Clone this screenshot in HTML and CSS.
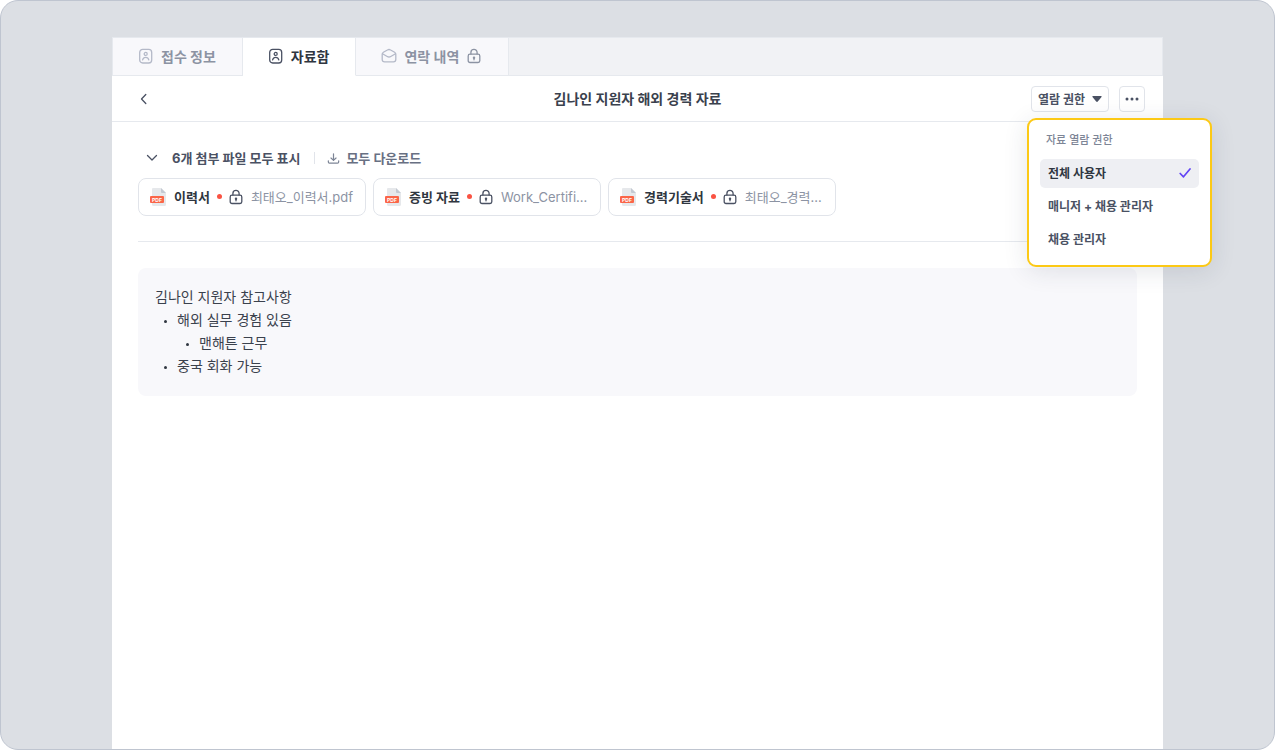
FILE: index.html
```html
<!DOCTYPE html>
<html lang="ko">
<head>
  <meta charset="UTF-8" />
  <meta name="viewport" content="width=device-width, initial-scale=1" />
  <title>자료함</title>
  <link rel="stylesheet" href="styles.css">
</head>
<body>

  <!-- Shared icons -->
  <svg class="sprite" aria-hidden="true">
    <symbol id="icon-profile" viewBox="0 0 16 16">
      <rect x="1.700" y="1.400" width="12" height="13.600" rx="3" />
      <circle cx="7.700" cy="5.900" r="1.500" />
      <path d="M4.600 11.800c.4-1.600 1.600-2.500 3.100-2.500s2.700.9 3.100 2.500" />
    </symbol>
    <symbol id="icon-mail" viewBox="0 0 16 16">
      <path d="M1.200 6.300c0-1 .4-1.600 1.200-2.100l4-2.200c1-.6 2.200-.6 3.200 0l4 2.200c.8.500 1.200 1.100 1.200 2.100v5.200c0 1.500-.9 2.400-2.400 2.400H3.600c-1.500 0-2.400-.9-2.400-2.400z" />
      <path d="M1.500 5.800l4.700 2.700c1.200.7 2.400.7 3.600 0l4.700-2.700" />
    </symbol>
    <symbol id="icon-lock" viewBox="0 0 16 16">
      <rect x="2.200" y="6.200" width="11.600" height="8.300" rx="1.800" />
      <path d="M4.900 6V4.500a3.100 3.100 0 0 1 6.200 0V6M8 10v1.800" />
      <circle cx="8" cy="9.700" r=".6" />
    </symbol>
  </svg>

  <main class="panel">
    <nav class="tabs">
      <button type="button" class="tab">
        <svg class="icon"><use href="#icon-profile" /></svg>
        <span>접수 정보</span>
      </button>
      <button type="button" class="tab active">
        <svg class="icon"><use href="#icon-profile" /></svg>
        <span>자료함</span>
      </button>
      <button type="button" class="tab">
        <svg class="icon"><use href="#icon-mail" /></svg>
        <span>연락 내역</span>
        <svg class="icon lock"><use href="#icon-lock" /></svg>
      </button>
    </nav>

    <header class="header">
      <button type="button" class="back" aria-label="뒤로">
        <svg class="icon" viewBox="0 0 16 16"><path d="M9.800 3.500L5.500 8l4.300 4.500" /></svg>
      </button>
      <h1>김나인 지원자 해외 경력 자료</h1>
      <div class="actions">
        <div class="dropdown">
          <button type="button" class="btn">
            <span>열람 권한</span>
            <svg class="caret" viewBox="0 0 10 6"><path d="M1 0h8q1.200 0 .5 1L5.800 5.500q-.8.800-1.600 0L.5 1Q-.2 0 1 0z" /></svg>
          </button>
          <div class="menu">
            <p class="menu-title">자료 열람 권한</p>
            <button type="button" class="menu-item selected">
              <span>전체 사용자</span>
              <svg class="check" viewBox="0 0 12 10"><path d="M1.200 5.500l3.300 3.300L11 1" /></svg>
            </button>
            <button type="button" class="menu-item">매니저 + 채용 관리자</button>
            <button type="button" class="menu-item">채용 관리자</button>
          </div>
        </div>
        <button type="button" class="btn more" aria-label="더보기">
          <svg class="dots" viewBox="0 0 14 4"><circle cx="2" cy="2" r="1.500" /><circle cx="7" cy="2" r="1.500" /><circle cx="12" cy="2" r="1.500" /></svg>
        </button>
      </div>
    </header>

    <section class="content">
      <div class="file-bar">
        <button type="button" class="toggle">
          <svg class="icon" viewBox="0 0 16 16"><path d="M3.500 5.500L8 10 12.500 5.500" /></svg>
          <span>6개 첨부 파일 모두 표시</span>
        </button>
        <button type="button" class="download">
          <svg class="icon" viewBox="0 0 16 16"><path d="M8 3v7M5.300 7.500L8 10l2.700-2.500M2.500 10.500v1.300q0 1.200 1.200 1.200h8.600q1.200 0 1.200-1.200v-1.300" /></svg>
          <span>모두 다운로드</span>
        </button>
      </div>

      <div class="files">
        <a class="file" href="#">
          <svg class="pdf" viewBox="0 0 16 18">
            <path d="M3 0h8l5 5v11.500a1.500 1.500 0 0 1-1.500 1.500h-11A1.500 1.500 0 0 1 2 16.500V1a1 1 0 0 1 1-1z" fill="#e6e8eb" />
            <path d="M11 0l5 5h-4a1 1 0 0 1-1-1z" fill="#c3c9d2" />
            <rect x="0" y="8" width="14" height="7" rx="1" fill="#fb6548" />
            <text x="7" y="13.500" text-anchor="middle">PDF</text>
          </svg>
          <strong>이력서</strong>
          <span class="dot"></span>
          <svg class="icon"><use href="#icon-lock" /></svg>
          <span class="file-name">최태오_이력서.pdf</span>
        </a>
        <a class="file" href="#">
          <svg class="pdf" viewBox="0 0 16 18">
            <path d="M3 0h8l5 5v11.500a1.500 1.500 0 0 1-1.500 1.500h-11A1.500 1.500 0 0 1 2 16.500V1a1 1 0 0 1 1-1z" fill="#e6e8eb" />
            <path d="M11 0l5 5h-4a1 1 0 0 1-1-1z" fill="#c3c9d2" />
            <rect x="0" y="8" width="14" height="7" rx="1" fill="#fb6548" />
            <text x="7" y="13.500" text-anchor="middle">PDF</text>
          </svg>
          <strong>증빙 자료</strong>
          <span class="dot"></span>
          <svg class="icon"><use href="#icon-lock" /></svg>
          <span class="file-name">Work_Certifi...</span>
        </a>
        <a class="file" href="#">
          <svg class="pdf" viewBox="0 0 16 18">
            <path d="M3 0h8l5 5v11.500a1.500 1.500 0 0 1-1.500 1.500h-11A1.500 1.500 0 0 1 2 16.500V1a1 1 0 0 1 1-1z" fill="#e6e8eb" />
            <path d="M11 0l5 5h-4a1 1 0 0 1-1-1z" fill="#c3c9d2" />
            <rect x="0" y="8" width="14" height="7" rx="1" fill="#fb6548" />
            <text x="7" y="13.500" text-anchor="middle">PDF</text>
          </svg>
          <strong>경력기술서</strong>
          <span class="dot"></span>
          <svg class="icon"><use href="#icon-lock" /></svg>
          <span class="file-name">최태오_경력...</span>
        </a>
      </div>

      <div class="note">
        <p>김나인 지원자 참고사항</p>
        <ul>
          <li>해외 실무 경험 있음
            <ul>
              <li>맨해튼 근무</li>
            </ul>
          </li>
          <li>중국 회화 가능</li>
        </ul>
      </div>
    </section>
  </main>

</body>
</html>
```
FILE: styles.css
```css
* {
  box-sizing: border-box;
}
html {
  background: #fff;
}
body {
  display: flex;
  min-height: 100vh;
  margin: 0;
  padding: 36px 111px 0;
  background: #dcdfe4;
  border: 1px solid #bfc5d0;
  border-radius: 18px;
  font-family: Inter, 'Noto Sans CJK KR', sans-serif;
  font-size: 14px;
  color: #3a414d;
}
h1, p, ul {
  margin: 0;
  padding: 0;
}
button {
  font: inherit;
  color: inherit;
  background: none;
  border: none;
  padding: 0;
  cursor: pointer;
}
.sprite {
  position: absolute;
  width: 0;
  height: 0;
}
.icon {
  flex: none;
  width: 16px;
  height: 16px;
  fill: none;
  stroke: currentColor;
  stroke-width: 1.3;
  stroke-linecap: round;
  stroke-linejoin: round;
}

.panel {
  flex: 1;
  min-width: 0;
  background: #fff;
}

/* Tabs */
.tabs {
  display: flex;
  height: 39px;
  background: #f1f2f5;
  border: 1px solid #e6e9ee;
}
.tab {
  display: flex;
  align-items: center;
  gap: 7px;
  margin-bottom: -1px;
  padding: 0 26px 2px 25px;
  background: #f8f8fb;
  border-right: 1px solid #e6e9ee;
  border-bottom: 1px solid #e6e9ee;
  color: #8c93a3;
  font-weight: 700;
}
.tab .icon {
  color: #b4b9c8;
}
.tab .lock {
  color: #8c93a3;
}
.tab.active {
  background: #fff;
  border-bottom-color: #fff;
  color: #2f3640;
}
.tab.active .icon {
  color: #4a5163;
}

/* Header */
.header {
  display: grid;
  grid-template-columns: 1fr auto 1fr;
  align-items: center;
  height: 46px;
  padding: 0 18px;
  border-bottom: 1px solid #e6e9ee;
}
.header h1 {
  padding-bottom: 1px;
  font-size: 14px;
  font-weight: 700;
}
.back {
  display: flex;
  padding-left: 6px;
  color: #4a5163;
}
.actions {
  display: flex;
  justify-content: flex-end;
  gap: 10px;
}
.btn {
  display: flex;
  align-items: center;
  gap: 7px;
  height: 26px;
  padding: 0 6px;
  background: #fff;
  border: 1px solid #e1e4ea;
  border-radius: 4px;
  font-size: 12px;
  font-weight: 700;
  color: #4a5163;
}
.btn span {
  padding-bottom: 1px;
}
.caret {
  width: 10px;
  height: 6px;
  fill: #4a5163;
}
.dots {
  width: 14px;
  height: 4px;
  fill: #4a5163;
}
.more {
  padding: 0 5px;
}

/* Permission menu */
.dropdown {
  position: relative;
}
.menu {
  position: absolute;
  top: 32px;
  left: -4px;
  width: 185px;
  padding: 11px 11px 7px;
  background: #fff;
  border: 2px solid #fcc915;
  border-radius: 9px;
  box-shadow: 0 4px 24px rgba(40, 50, 70, 0.12);
}
.menu-title {
  padding: 0 6px;
  margin-bottom: 10px;
  font-size: 11px;
  font-weight: 500;
  line-height: 18px;
  color: #7d8596;
}
.menu-item {
  display: flex;
  align-items: center;
  justify-content: space-between;
  width: 100%;
  height: 29px;
  margin-bottom: 4px;
  padding: 0 8px 1px;
  border-radius: 5px;
  font-size: 12px;
  font-weight: 700;
  color: #4a5163;
}
.menu-item.selected {
  background: #eeeff3;
  color: #2f3640;
}
.check {
  width: 12px;
  height: 10px;
  fill: none;
  stroke: #6244f5;
  stroke-width: 1.7;
  stroke-linecap: round;
  stroke-linejoin: round;
}

/* Attachments */
.content {
  padding: 26px;
}
.file-bar {
  display: flex;
  align-items: center;
  height: 20px;
  margin-bottom: 10px;
  font-size: 13px;
  line-height: 20px;
}
.file-bar span {
  padding-bottom: 1px;
}
.toggle, .download {
  display: flex;
  align-items: center;
}
.toggle {
  gap: 12px;
  padding-left: 6px;
  font-weight: 700;
  color: #4a5163;
}
.download {
  gap: 5px;
  margin-left: 14px;
  font-weight: 700;
  color: #687083;
}
.download::before {
  content: '';
  width: 1px;
  height: 12px;
  margin-right: 6px;
  background: #e1e4ea;
}
.download .icon {
  width: 15px;
  height: 15px;
  color: #7d8596;
}
.files {
  display: flex;
  gap: 7px;
  padding-bottom: 25px;
  border-bottom: 1px solid #e6e9ee;
}
.file {
  display: flex;
  align-items: center;
  width: 228px;
  height: 38px;
  padding: 0 11px 1px;
  border: 1px solid #e1e4ea;
  border-radius: 8px;
  font-size: 13px;
  color: #2f3640;
  text-decoration: none;
  white-space: nowrap;
}
.pdf {
  flex: none;
  width: 16px;
  height: 18px;
  margin-right: 8px;
}
.pdf text {
  font-size: 5px;
  font-weight: 700;
  fill: #fff;
}
.dot {
  flex: none;
  width: 5px;
  height: 5px;
  margin: 0 6px 0 7px;
  border-radius: 50%;
  background: #fa5343;
}
.file .icon {
  margin-right: 7px;
  color: #4a5163;
}
.file-name {
  color: #8c93a3;
}

/* Note */
.note {
  margin-top: 26px;
  padding: 17px 17px 19px;
  border-radius: 8px;
  background: #f8f8fb;
  line-height: 23px;
}
.note ul {
  list-style: none;
}
.note li {
  position: relative;
  padding-left: 22px;
}
.note li::before {
  content: '';
  position: absolute;
  left: 9px;
  top: 12px;
  width: 3px;
  height: 3px;
  border-radius: 50%;
  background: #2f3640;
}
```
